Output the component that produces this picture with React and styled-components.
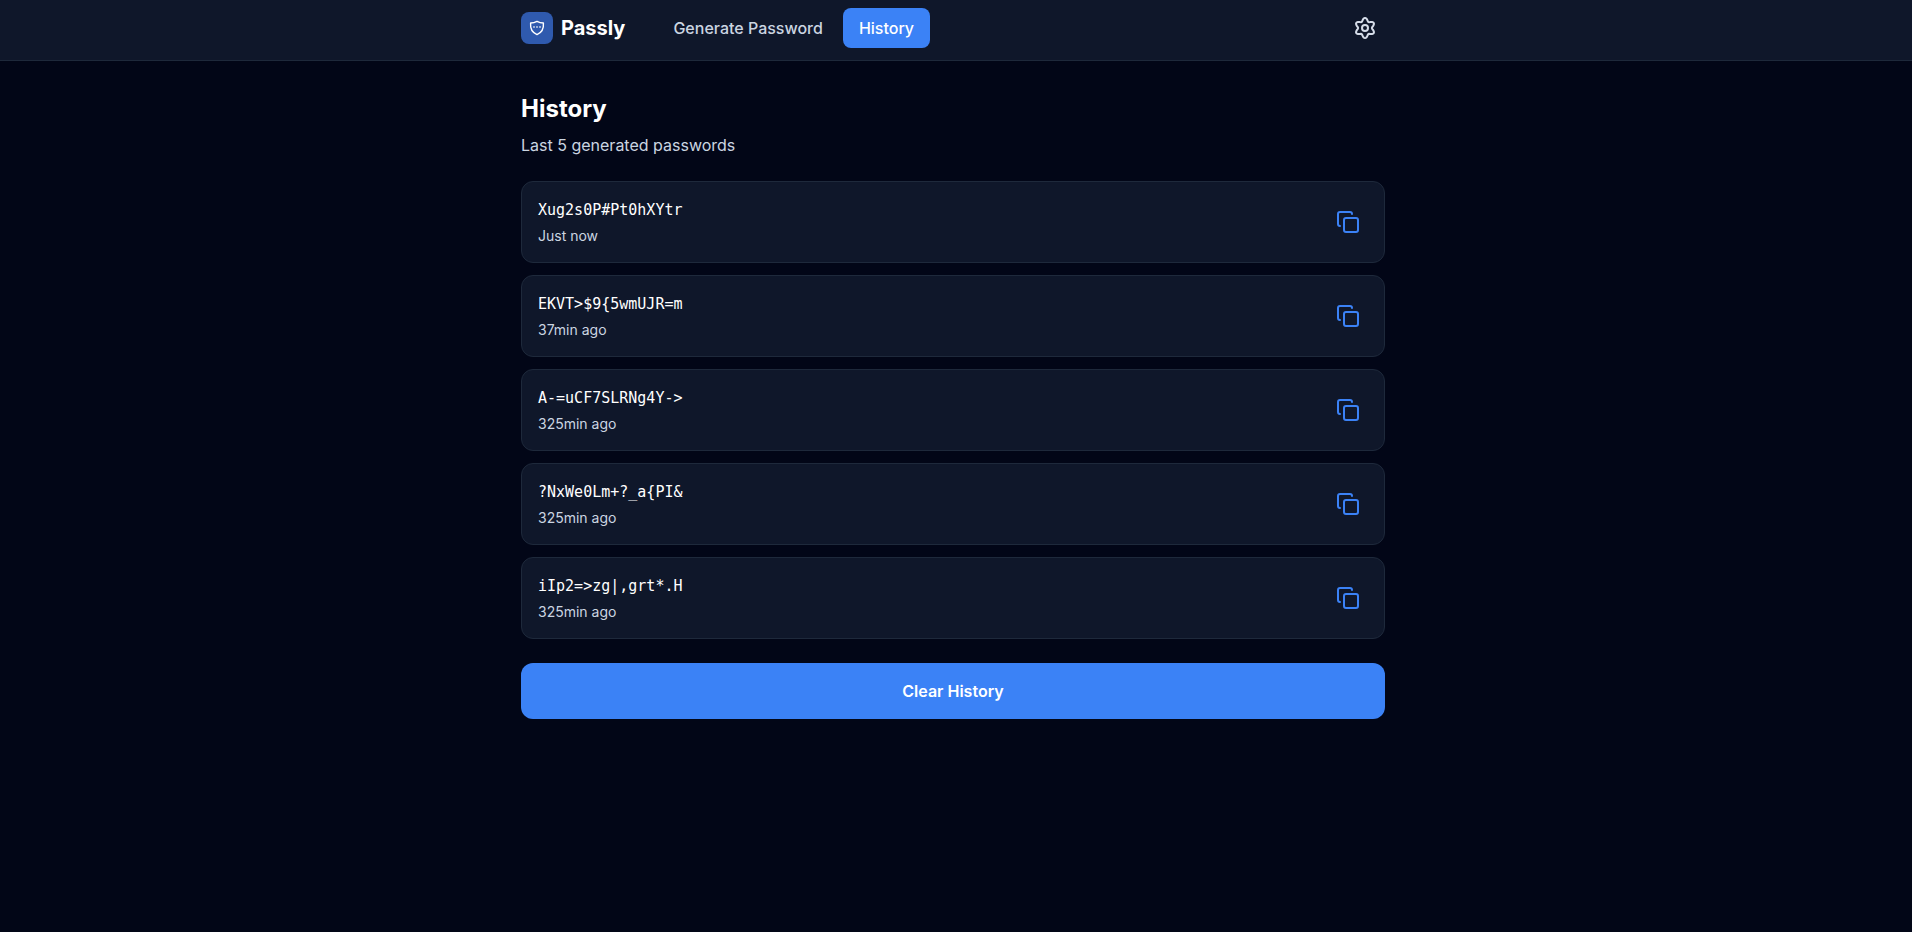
import React from 'react';
import styled, { createGlobalStyle } from 'styled-components';
import { Copy } from 'lucide-react';

const GlobalStyle = createGlobalStyle`
    * {
        box-sizing: border-box;
    }

    body {
        margin: 0;
        background: #020617;
        color: #ffffff;
        font-family: Inter, "Liberation Sans", sans-serif;
        font-size: 16px;
        line-height: 24px;
    }

    button {
        font-family: inherit;
        cursor: pointer;
    }
`;

const Header = styled.header`
    padding-right: 6px;
    background: #0f172a;
    border-bottom: 1px solid #1e293b;
`;

const Page = styled.main`
    padding-right: 6px;
`;

const Container = styled.div`
    max-width: 896px;
    margin: 0 auto;
    padding: 0 16px;
`;

const HeaderInner = styled(Container)`
    display: flex;
    align-items: center;
    padding-top: 8px;
    padding-bottom: 12px;
`;

const Brand = styled.a`
    display: flex;
    align-items: center;
    gap: 8px;
    margin-right: 32px;
    color: #ffffff;
    font-size: 20px;
    font-weight: 700;
    text-decoration: none;
`;

const Logo = styled.span`
    display: flex;
    align-items: center;
    justify-content: center;
    width: 32px;
    height: 32px;
    border-radius: 8px;
    background: #2f5aae;
`;

const Nav = styled.nav`
    display: flex;
    gap: 4px;
`;

const NavLink = styled.a`
    padding: 8px 16px;
    border-radius: 8px;
    background: ${({ $active }) => ($active ? '#3b82f6' : 'transparent')};
    color: ${({ $active }) => ($active ? '#ffffff' : '#cbd5e1')};
    font-weight: 500;
    text-decoration: none;
`;

const SettingsBtn = styled.button`
    display: flex;
    margin-left: auto;
    padding: 8px;
    border: none;
    background: none;
    color: #d5dce8;
`;

const Content = styled(Container)`
    padding-top: 32px;
    padding-bottom: 32px;
`;

const Title = styled.h1`
    margin: 0 0 8px;
    font-size: 24px;
    line-height: 32px;
    font-weight: 700;
`;

const Subtitle = styled.p`
    margin: 0 0 24px;
    color: #cbd5e1;
`;

const List = styled.ul`
    display: flex;
    flex-direction: column;
    gap: 12px;
    margin: 0 0 24px;
    padding: 0;
    list-style: none;
`;

const Item = styled.li`
    display: flex;
    align-items: center;
    justify-content: space-between;
    padding: 16px;
    border: 1px solid #1e293b;
    border-radius: 12px;
    background: #0f172a;
`;

const Password = styled.p`
    margin: 0 0 4px;
    font-family: "DejaVu Sans Mono", monospace;
    font-size: 15px;
`;

const Time = styled.p`
    margin: 0;
    color: #cbd5e1;
    font-size: 14px;
    line-height: 20px;
`;

const CopyBtn = styled.button`
    display: flex;
    padding: 8px;
    border: none;
    background: none;
    color: #3b82f6;
`;

const ClearBtn = styled.button`
    width: 100%;
    padding: 16px;
    border: none;
    border-radius: 12px;
    background: #3b82f6;
    color: #ffffff;
    font-size: 16px;
    line-height: 24px;
    font-weight: 600;
`;

const history = [
    { password: 'Xug2s0P#Pt0hXYtr', time: 'Just now' },
    { password: 'EKVT>$9{5wmUJR=m', time: '37min ago' },
    { password: 'A-=uCF7SLRNg4Y->', time: '325min ago' },
    { password: '?NxWe0Lm+?_a{PI&', time: '325min ago' },
    { password: 'iIp2=>zg|,grt*.H', time: '325min ago' },
];

const ShieldIcon = () => (
    <svg width="16" height="16" viewBox="0 0 16 16" fill="none" stroke="currentColor" strokeLinejoin="round">
        <path d="M8 1.4 C9.8 2.4 12 3 14.4 3 C14.9 8.4 12.6 12.6 8 14.6 C3.4 12.6 1.1 8.4 1.6 3 C4 3 6.2 2.4 8 1.4 Z" strokeWidth="1.4" />
        <path d="M4 7 H12" strokeWidth="1.2" strokeDasharray="2 1" />
    </svg>
);

// six round teeth, the first one pointing up
const gearPath = Array.from({ length: 72 }, (_, i) => {
    const angle = (i * Math.PI) / 36;
    const radius = 8.5 + 1.6 * Math.cos(6 * angle);
    const x = 12 + radius * Math.sin(angle);
    const y = 12 - radius * Math.cos(angle);
    return `${i ? 'L' : 'M'}${x.toFixed(2)} ${y.toFixed(2)}`;
}).join(' ');

const GearIcon = () => (
    <svg width="24" height="24" viewBox="0 0 24 24" fill="none" stroke="currentColor" strokeWidth="2" strokeLinejoin="round">
        <path d={`${gearPath} Z`} />
        <circle cx="12" cy="12" r="3" />
    </svg>
);

const App = () => {
    return (
        <>
            <GlobalStyle />
            <Header>
                <HeaderInner>
                    <Brand href="#">
                        <Logo><ShieldIcon /></Logo>
                        Passly
                    </Brand>
                    <Nav>
                        <NavLink href="#generate">Generate Password</NavLink>
                        <NavLink href="#history" $active>History</NavLink>
                    </Nav>
                    <SettingsBtn type="button" aria-label="Settings">
                        <GearIcon />
                    </SettingsBtn>
                </HeaderInner>
            </Header>
            <Page>
                <Content>
                    <Title>History</Title>
                    <Subtitle>Last 5 generated passwords</Subtitle>
                    <List>
                        {history.map(({ password, time }) => (
                            <Item key={password}>
                                <div>
                                    <Password>{password}</Password>
                                    <Time>{time}</Time>
                                </div>
                                <CopyBtn type="button" aria-label="Copy password">
                                    <Copy size={24} />
                                </CopyBtn>
                            </Item>
                        ))}
                    </List>
                    <ClearBtn type="button">Clear History</ClearBtn>
                </Content>
            </Page>
        </>
    );
}

export default App;
